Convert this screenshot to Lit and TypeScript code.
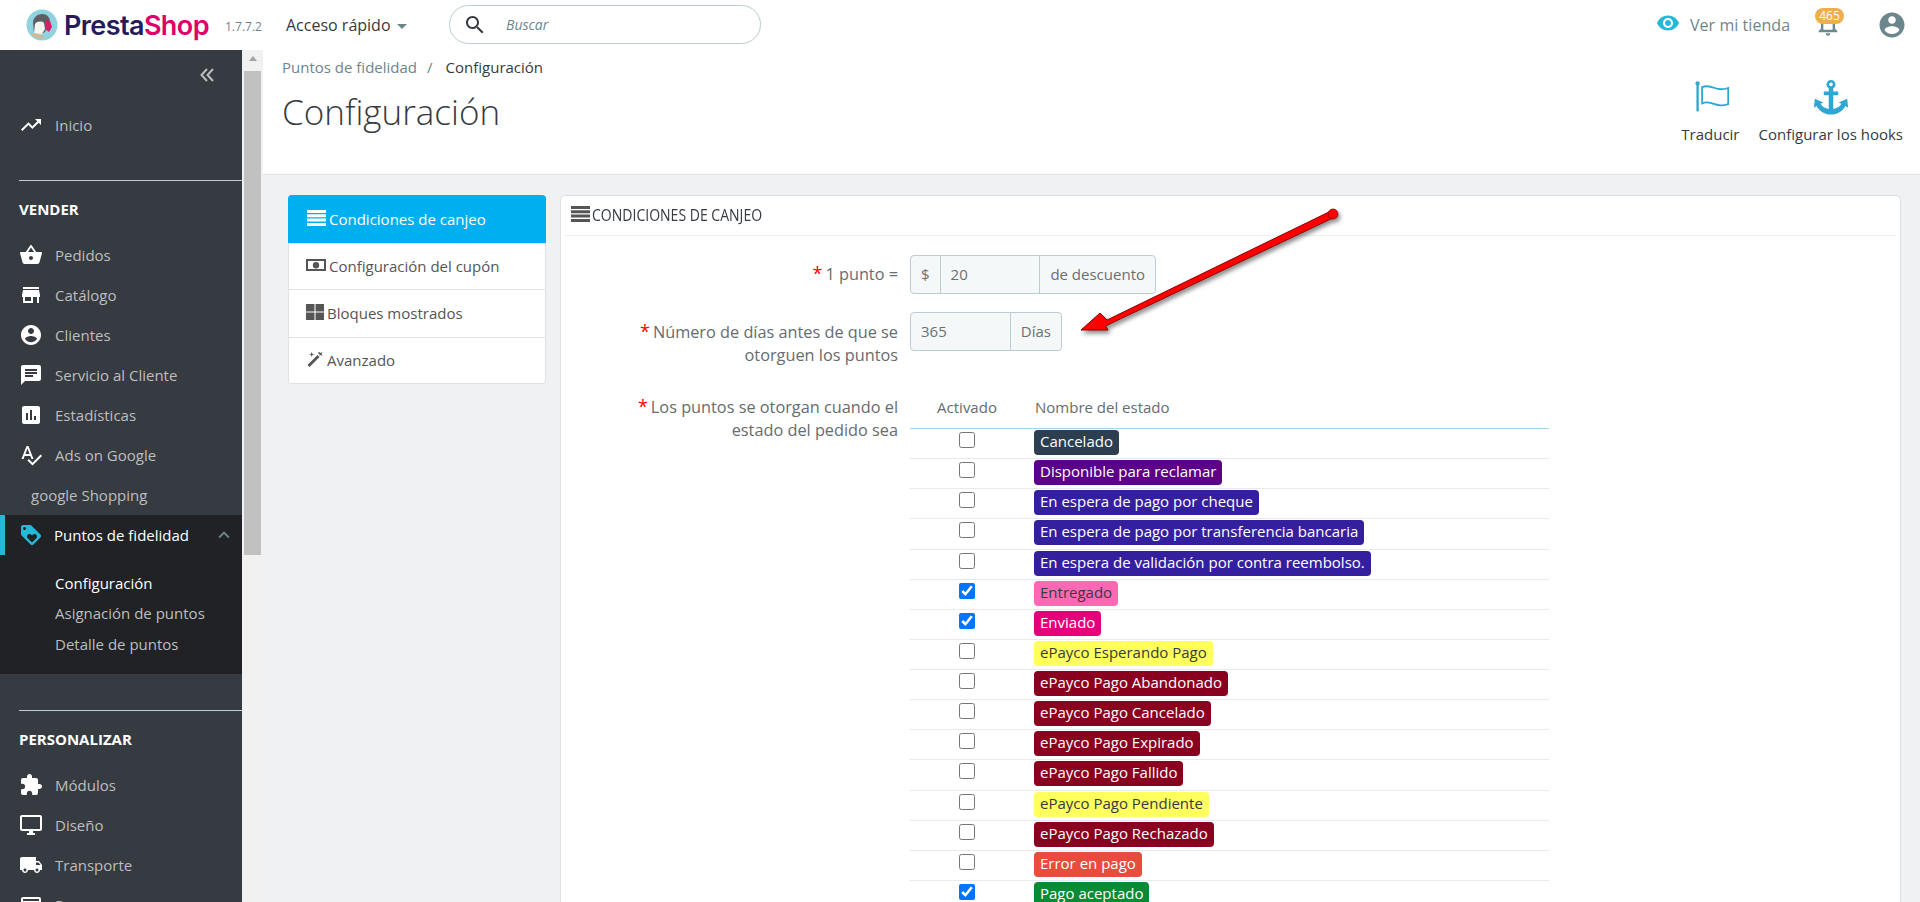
import { LitElement, html, css, svg } from "lit";
import { customElement } from "lit/decorators.js";

const P: Record<string, string> = {
  trend: "M16 6l2.29 2.29-4.88 4.88-4-4L2 16.59 3.41 18l6-6 4 4 6.3-6.29L22 12V6z",
  basket: "M17.21 9l-4.38-6.56c-.19-.28-.51-.42-.83-.42-.32 0-.64.14-.83.43L6.79 9H2c-.55 0-1 .45-1 1 0 .09.01.18.04.27l2.54 9.27c.23.84 1 1.46 1.92 1.46h13c.92 0 1.69-.62 1.93-1.46l2.54-9.27L23 10c0-.55-.45-1-1-1h-4.79zM9 9l3-4.4L15 9H9zm3 8c-1.1 0-2-.9-2-2s.9-2 2-2 2 .9 2 2-.9 2-2 2z",
  store: "M20 4H4v2h16V4zm1 10v-2l-1-5H4l-1 5v2h1v6h10v-6h4v6h2v-6h1zm-9 4H6v-4h6v4z",
  account: "M12 2C6.48 2 2 6.48 2 12s4.48 10 10 10 10-4.48 10-10S17.52 2 12 2zm0 3c1.66 0 3 1.34 3 3s-1.34 3-3 3-3-1.34-3-3 1.34-3 3-3zm0 14.2c-2.5 0-4.71-1.28-6-3.22.03-1.99 4-3.08 6-3.08 1.99 0 5.97 1.09 6 3.08-1.29 1.94-3.5 3.22-6 3.22z",
  chat: "M20 2H4c-1.1 0-1.99.9-1.99 2L2 22l4-4h14c1.1 0 2-.9 2-2V4c0-1.1-.9-2-2-2zM6 9h12v2H6V9zm8 5H6v-2h8v2zm4-6H6V6h12v2z",
  stats: "M19 3H5c-1.1 0-2 .9-2 2v14c0 1.1.9 2 2 2h14c1.1 0 2-.9 2-2V5c0-1.1-.9-2-2-2zM9 17H7v-7h2v7zm4 0h-2V7h2v10zm4 0h-2v-4h2v4z",
  spell: "M12.45 16h2.09L9.43 3H7.57L2.46 16h2.09l1.12-3h5.64l1.14 3zm-6.02-5L8.5 5.48 10.57 11H6.43zm15.16.59l-8.09 8.09L9.83 16l-1.41 1.41 5.09 5.09L23 13l-1.41-1.41z",
  loyalty: "M21.41 11.58l-9-9C12.05 2.22 11.55 2 11 2H4c-1.1 0-2 .9-2 2v7c0 .55.22 1.05.59 1.42l9 9c.36.36.86.58 1.41.58.55 0 1.05-.22 1.41-.59l7-7c.37-.36.59-.86.59-1.41 0-.55-.23-1.06-.59-1.42zM5.5 7C4.67 7 4 6.33 4 5.5S4.67 4 5.5 4 7 4.67 7 5.5 6.33 7 5.5 7zm11.77 8.27L13 19.54l-4.27-4.27C8.28 14.81 8 14.19 8 13.5c0-1.38 1.12-2.5 2.5-2.5.69 0 1.32.28 1.77.74l.73.72.73-.73c.45-.45 1.08-.73 1.77-.73 1.38 0 2.5 1.12 2.5 2.5 0 .69-.28 1.32-.73 1.77z",
  ext: "M20.5 11H19V7c0-1.1-.9-2-2-2h-4V3.5C13 2.12 11.88 1 10.5 1S8 2.12 8 3.5V5H4c-1.1 0-1.99.9-1.99 2v3.8H3.5c1.49 0 2.7 1.21 2.7 2.7s-1.21 2.7-2.7 2.7H2V20c0 1.1.9 2 2 2h3.8v-1.5c0-1.49 1.21-2.7 2.7-2.7 1.49 0 2.7 1.21 2.7 2.7V22H17c1.1 0 2-.9 2-2v-4h1.5c1.38 0 2.5-1.12 2.5-2.5S21.88 11 20.5 11z",
  desktop: "M21 2H3c-1.1 0-2 .9-2 2v12c0 1.1.9 2 2 2h7v2H8v2h8v-2h-2v-2h7c1.1 0 2-.9 2-2V4c0-1.1-.9-2-2-2zm0 14H3V4h18v12z",
  ship: "M20 8h-3V4H3c-1.1 0-2 .9-2 2v11h2c0 1.66 1.34 3 3 3s3-1.34 3-3h6c0 1.66 1.34 3 3 3s3-1.34 3-3h2v-5l-3-4zM6 18.5c-.83 0-1.5-.67-1.5-1.5s.67-1.5 1.5-1.5 1.5.67 1.5 1.5-.67 1.5-1.5 1.5zm13.5-9l1.96 2.5H17V9.5h2.5zm-1.5 9c-.83 0-1.5-.67-1.5-1.5s.67-1.5 1.5-1.5 1.5.67 1.5 1.5-.67 1.5-1.5 1.5z",
  pay: "M20 4H4c-1.11 0-1.99.89-1.99 2L2 18c0 1.11.89 2 2 2h16c1.11 0 2-.89 2-2V6c0-1.11-.89-2-2-2zm0 14H4v-6h16v6zm0-10H4V6h16v2z",
  eye: "M12 4.5C7 4.5 2.73 7.61 1 12c1.73 4.39 6 7.5 11 7.5s9.27-3.11 11-7.5c-1.73-4.39-6-7.5-11-7.5zM12 17c-2.76 0-5-2.24-5-5s2.24-5 5-5 5 2.24 5 5-2.24 5-5 5zm0-8c-1.66 0-3 1.34-3 3s1.34 3 3 3 3-1.34 3-3-1.34-3-3-3z",
  bell: "M12 22c1.1 0 2-.9 2-2h-4c0 1.1.9 2 2 2zm6-6v-5c0-3.07-1.63-5.64-4.5-6.32V4c0-.83-.67-1.5-1.5-1.5s-1.5.67-1.5 1.5v.68C7.64 5.36 6 7.92 6 11v5l-2 2v1h16v-1l-2-2zm-2 1H8v-6c0-2.48 1.51-4.5 4-4.5s4 2.02 4 4.5v6z",
  search: "M15.5 14h-.79l-.28-.27C15.41 12.59 16 11.11 16 9.5 16 5.91 13.09 3 9.5 3S3 5.91 3 9.5 5.91 16 9.5 16c1.61 0 3.09-.59 4.23-1.57l.27.28v.79l5 4.99L20.49 19l-4.99-5zm-6 0C7.01 14 5 11.99 5 9.5S7.01 5 9.5 5 14 7.01 14 9.5 11.99 14 9.5 14z",
  less: "M12 8l-6 6 1.41 1.41L12 10.83l4.59 4.58L18 14z",
};

const ic = (name: string, cls = "") =>
  html`<svg class="ic ${cls}" viewBox="0 0 24 24" fill="currentColor"><path d=${P[name]}></path></svg>`;

const STATES: [string, string, string, boolean][] = [
  ["Cancelado", "#2c3e50", "#fff", false],
  ["Disponible para reclamar", "#5c0089", "#fff", false],
  ["En espera de pago por cheque", "#34209e", "#fff", false],
  ["En espera de pago por transferencia bancaria", "#34209e", "#fff", false],
  ["En espera de validación por contra reembolso.", "#34209e", "#fff", false],
  ["Entregado", "#ff69b4", "#363a41", true],
  ["Enviado", "#e3007a", "#fff", true],
  ["ePayco Esperando Pago", "#ffff5e", "#363a41", false],
  ["ePayco Pago Abandonado", "#8a0120", "#fff", false],
  ["ePayco Pago Cancelado", "#8a0120", "#fff", false],
  ["ePayco Pago Expirado", "#8a0120", "#fff", false],
  ["ePayco Pago Fallido", "#8a0120", "#fff", false],
  ["ePayco Pago Pendiente", "#ffff5e", "#363a41", false],
  ["ePayco Pago Rechazado", "#8a0120", "#fff", false],
  ["Error en pago", "#e74c3c", "#fff", false],
  ["Pago aceptado", "#0a8a35", "#fff", true],
];

@customElement("app-root")
export class AppRoot extends LitElement {
  static styles = css`
    :host { display: block; height: 902px; overflow: hidden; position: relative; font-family: "Open Sans", sans-serif; font-size: 15px; color: #363a41; background: #fff; }
    * { box-sizing: border-box; }
    .ic { display: block; flex: none; }

    .top { height: 50px; display: flex; align-items: center; background: #fff; }
    .logo { display: flex; align-items: center; margin-left: 26px; width: 199px; gap: 6px; }
    .logo svg { width: 32px; height: 32px; flex: none; }
    .wordmark { font-family: "Inter", sans-serif; font-weight: 600; font-size: 27px; letter-spacing: -0.6px; color: #251b5b; line-height: 1; }
    .wordmark b { font-weight: 600; color: #df0067; }
    .ver { width: 61px; font-size: 12px; color: #6c868e; padding-top: 3px; }
    .quick { display: flex; align-items: center; gap: 6px; width: 163px; font-size: 16px; }
    .caret { width: 0; height: 0; border: 5px solid transparent; border-top-color: #6c868e; border-bottom: 0; margin-top: 2px; }
    .search { width: 312px; height: 39px; margin-top: -1px; border: 1px solid #bbcdd2; border-radius: 20px; display: flex; align-items: center; padding-left: 13px; gap: 20px; font-style: italic; font-size: 14px; color: #6c868e; }
    .search .ic { width: 24px; height: 24px; color: #363a41; margin-right: -1px; }
    .topright { margin-left: auto; display: flex; align-items: center; padding-right: 13px; }
    .eye { width: 24px; height: 24px; color: #25b9d7; margin: -4px 10px 0 0; }
    .shop { color: #6c868e; width: 124px; font-size: 16px; white-space: nowrap; letter-spacing: .05px; }
    .bellwrap { position: relative; width: 30px; height: 30px; margin-right: 33px; color: #6c868e; }
    .bellwrap .ic { width: 28px; height: 28px; }
    .count { position: absolute; left: 1px; top: -2px; height: 16px; width: 29px; border-radius: 8px; background: #f0ad4e; color: #fff; font-size: 12px; line-height: 16px; text-align: center; }
    .avatar { width: 30px; height: 30px; color: #6c868e; }

    .main { display: flex; height: 852px; }
    .side { width: 242px; flex: none; background: #363a41; color: #bebebe; overflow: hidden; }
    .collapse { height: 55px; display: flex; justify-content: flex-end; padding: 17px 27px 0 0; }
    .collapse svg { width: 16px; height: 16px; }
    .item { height: 40px; display: flex; align-items: center; padding-left: 19px; gap: 12px; }
    .item span { margin-top: -1px; }
    .item .ic { width: 24px; height: 24px; color: #fff; }
    .plain { padding-left: 31px; }
    .group { margin-top: 35px; margin-left: 19px; border-top: 1px solid #bbcdd2; padding: 17px 0 15px; font-weight: 700; color: #fff; line-height: 22px; }
    .group.second { margin-top: 36px; }
    .active { background: #202226; }
    .active .item { padding-left: 14px; border-left: 5px solid #25b9d7; color: #fff; padding-right: 7px; gap: 11px; }
    .active .item .ic:first-child { color: #25b9d7; }
    .active .item .chev { margin-left: auto; color: #6c868e; width: 22px; height: 22px; }
    .subs { padding: 13px 0 15px; }
    .sub { height: 30.4px; line-height: 30.4px; padding-left: 55px; }
    .sub.on { color: #fff; }

    .scroll { width: 21px; flex: none; background: #f1f1f1; padding: 0 2px; }
    .arrow { height: 17px; display: flex; justify-content: center; align-items: center; }
    .arrow i { width: 0; height: 0; border: 4px solid transparent; border-bottom: 5px solid #a3a3a3; border-top: 0; }
    .thumb { margin-top: 4px; height: 484px; background: #c1c1c1; }

    .content { flex: 1; min-width: 0; background: #eff1f2; overflow: hidden; }
    .head { height: 125px; background: #fff; border-bottom: 1px solid #dfe3e5; display: flex; justify-content: space-between; padding-left: 19px; }
    .crumb { margin-top: 7px; line-height: 20px; color: #6c868e; display: flex; gap: 10px; }
    .crumb b { font-weight: 400; color: #363a41; margin-left: 3px; }
    h1 { margin: 13px 0 0; font-size: 35px; font-weight: 300; line-height: 44px; color: #363a41; }
    .tools { display: flex; padding: 28px 17px 0 0; gap: 19px; }
    .tool { display: flex; flex-direction: column; align-items: center; color: #363a41; line-height: 20px; }
    .tool svg { width: 36px; height: 36px; color: #2ea8d2; margin: 1px 0 9px; }
    .tool svg.flag { margin-left: 3px; }

    .body { display: flex; align-items: flex-start; padding: 20px 19px 0 25px; gap: 14px; }
    .tabs { width: 258px; flex: none; background: #fff; border: 1px solid #dfe3e5; border-top: 0; border-radius: 4px; color: #555; }
    .tab { height: 46px; border-top: 1px solid #dfe3e5; display: flex; align-items: center; padding: 0 0 0 18px; gap: 3px; margin: 0 -1px; }
    .tab span { margin-top: -2px; }
    .tab.h48 { height: 48px; }
    .tab:first-child { height: 48px; background: #00aff0; color: #fff; border: 0; border-radius: 4px 4px 0 0; padding-left: 19px; }
    .tab:first-child span { margin-top: 0; }
    .tab svg { width: 19px; height: 16px; flex: none; margin-top: -3px; }
    .panel { flex: 1; background: #fff; border: 1px solid #dbe1e3; border-radius: 5px; height: 760px; padding: 0 4px; }
    .phead { height: 40px; border-bottom: 1px solid #eef0f1; display: flex; align-items: center; padding-left: 6px; gap: 2px; color: #363a41; }
    .phead svg { width: 19px; height: 16px; color: #555; margin-top: -3px; flex: none; }
    .phead span { font-size: 17px; transform: scaleX(0.825); transform-origin: left center; white-space: nowrap; margin-top: -2px; }

    .form { padding-top: 19px; display: flex; flex-direction: column; }
    .row { display: flex; gap: 12px; }
    .row1 { margin-bottom: 18px; }
    .row2 { height: 83px; }
    .lab { width: 285px; margin-left: 48px; flex: none; text-align: right; line-height: 23px; color: #666c70; font-size: 16.3px; }
    .lab.mid { align-self: center; }
    .lab i { font-style: normal; color: #f00; font-size: 18px; line-height: 1; margin-right: 3px; }
    .lab.two { margin-top: 9px; }
    .lab.three { margin-top: 1px; }
    .ig { display: flex; height: 39px; border: 1px solid #bbcdd2; border-radius: 4px; background: #f5f8f9; color: #6c6f72; line-height: 37px; white-space: nowrap; }
    .ig span { padding: 0 10px; }
    .ig span + span { border-left: 1px solid #bbcdd2; }
    .w1 { width: 246px; }
    .w2 { width: 152px; }
    .fill1 { width: 100px; }
    .fill2 { width: 99px; }

    .tbl { width: 639px; }
    .thr { height: 34px; padding-top: 1px; border-bottom: 1px solid #a4d3ee; display: grid; grid-template-columns: 124px 1fr; line-height: 23px; color: #666c70; }
    .thr span:first-child { text-align: center; padding-right: 10px; }
    .thr span:last-child { padding-left: 1px; }
    .tr { height: 30.13px; border-bottom: 1px solid #e7ebed; display: grid; grid-template-columns: 124px 1fr; align-items: start; padding-top: 1px; }
    .tr .cb { display: flex; justify-content: center; padding: 2px 10px 0 0; }
    .tr input { width: 16px; height: 16px; margin: 0; }
    .badge { display: inline-block; height: 25px; line-height: 23px; padding: 0 6px; border-radius: 4px; }

    .annot { position: absolute; left: 1070px; top: 200px; pointer-events: none; filter: drop-shadow(2px 3px 2px rgba(0,0,0,.45)); }
  `;

  private side(icon: string, label: string) {
    return html`<div class="item">${ic(icon)}<span>${label}</span></div>`;
  }

  render() {
    return html`
      <div class="top">
        <div class="logo">
          <svg viewBox="0 0 32 32">
            <circle cx="16" cy="16" r="15.5" fill="#8fd3df"></circle>
            <path d="M7 14c0-5 4-9 9-9s7 3 8 6l-2 4-3 8-6 3-5-2z" fill="#5d5f63"></path>
            <path d="M9 15c2-3 7-3 9-1l1 6-3 5-5 2-3-3z" fill="#f4f4f1"></path>
            <path d="M19 11l5 1 2 6-3 5-4-3z" fill="#d81d6b"></path>
            <path d="M5 26c4 3 9 5 14 3l-5-4-6-1z" fill="#cdbb98"></path>
          </svg>
          <span class="wordmark">Presta<b>Shop</b></span>
        </div>
        <div class="ver">1.7.7.2</div>
        <div class="quick"><span>Acceso rápido</span><i class="caret"></i></div>
        <div class="search">${ic("search")}<span>Buscar</span></div>
        <div class="topright">
          ${ic("eye", "eye")}<span class="shop">Ver mi tienda</span>
          <div class="bellwrap">${ic("bell")}<span class="count">465</span></div>
          ${ic("account", "avatar")}
        </div>
      </div>
      <div class="main">
        <nav class="side">
          <div class="collapse">
            <svg viewBox="0 0 16 16" fill="none" stroke="#bebebe" stroke-width="2"><path d="M8 2L2.500 8 8 14M14 2L8.500 8 14 14"></path></svg>
          </div>
          ${this.side("trend", "Inicio")}
          <div class="group">VENDER</div>
          ${this.side("basket", "Pedidos")}
          ${this.side("store", "Catálogo")}
          ${this.side("account", "Clientes")}
          ${this.side("chat", "Servicio al Cliente")}
          ${this.side("stats", "Estadísticas")}
          ${this.side("spell", "Ads on Google")}
          <div class="item plain"><span>google Shopping</span></div>
          <div class="active">
            <div class="item">${ic("loyalty")}<span>Puntos de fidelidad</span>${ic("less", "chev")}</div>
            <div class="subs">
              <div class="sub on">Configuración</div>
              <div class="sub">Asignación de puntos</div>
              <div class="sub">Detalle de puntos</div>
            </div>
          </div>
          <div class="group second">PERSONALIZAR</div>
          ${this.side("ext", "Módulos")}
          ${this.side("desktop", "Diseño")}
          ${this.side("ship", "Transporte")}
          ${this.side("pay", "Pago")}
        </nav>
        <div class="scroll"><div class="arrow"><i></i></div><div class="thumb"></div></div>
        <div class="content">
          <div class="head">
            <div>
              <div class="crumb"><span>Puntos de fidelidad</span><span>/</span><b>Configuración</b></div>
              <h1>Configuración</h1>
            </div>
            <div class="tools">
              <div class="tool">
                <svg class="flag" viewBox="0 0 40 40" fill="none" stroke="currentColor" stroke-width="2"><path d="M4 6v30" stroke-width="2.600"></path><circle cx="4" cy="5" r="2.400" fill="currentColor" stroke="none"></circle><path d="M9 9c5-2 9-1 14 1s9 2 15 0v18c-6 2-10 2-15 0s-9-3-14-1z"></path></svg>
                <span>Traducir</span>
              </div>
              <div class="tool">
                <svg viewBox="0 0 40 40" fill="currentColor"><path fill-rule="evenodd" d="M20 1a5 5 0 0 1 2.500 9.300V14H28v4h-5.500v15.200c4-.5 7.500-2.600 9-5.700L28.500 26 38 22l1 10-3-2c-3 6-9 9.500-16 9.500S7 36 4 30l-3 2 1-10 9.500 4-3 1.500c1.500 3.100 5 5.200 9 5.700V18H12v-4h5.500v-3.700A5 5 0 0 1 20 1zm0 3a2 2 0 1 0 0 4 2 2 0 0 0 0-4z"></path></svg>
                <span>Configurar los hooks</span>
              </div>
            </div>
          </div>
          <div class="body">
            <div class="tabs">
              <div class="tab">
                <svg viewBox="0 0 19 16" fill="currentColor"><path d="M0 0h19v3H0zM0 4.300h19v3H0zM0 8.600h19v3H0zM0 12.900h19v3H0z"></path></svg>
                <span>Condiciones de canjeo</span>
              </div>
              <div class="tab">
                <svg viewBox="0 0 20 16" fill="#555" style="width:20px"><path fill-rule="evenodd" d="M0 2h20v12H0zM2 4v8h16V4zM10 5a3.200 3.200 0 1 1 0 6.400A3.200 3.200 0 0 1 10 5z"></path></svg>
                <span>Configuración del cupón</span>
              </div>
              <div class="tab h48">
                <svg style="width:18px" viewBox="0 0 17 15" fill="#555"><path d="M0 0h8v7H0zM9 0h8v7H9zM0 8h8v7H0zM9 8h8v7H9z"></path></svg>
                <span>Bloques mostrados</span>
              </div>
              <div class="tab">
                <svg style="width:18px" viewBox="0 0 17 16" fill="#555"><path d="M1 14L11 4l2 2L3 16zM13 1l1 1 2-1-1 2 1 2-2-1-1 1v-2l-2-1zM5 1l1 2 2 .5-2 .5-1 2-.5-2-2-.5 2-.5z"></path></svg>
                <span>Avanzado</span>
              </div>
            </div>
            <div class="panel">
              <div class="phead">
                <svg viewBox="0 0 19 16" fill="currentColor"><path d="M0 0h19v3H0zM0 4.300h19v3H0zM0 8.600h19v3H0zM0 12.900h19v3H0z"></path></svg>
                <span>CONDICIONES DE CANJEO</span>
              </div>
              <div class="form">
                <div class="row row1">
                  <div class="lab mid"><i>*</i>1 punto =</div>
                  <div class="ig w1"><span>$</span><span class="fill1">20</span><span>de descuento</span></div>
                </div>
                <div class="row row2">
                  <div class="lab two"><i>*</i>Número de días antes de que se otorguen los puntos</div>
                  <div class="ig w2"><span class="fill2">365</span><span>Días</span></div>
                </div>
                <div class="row">
                  <div class="lab three"><i>*</i>Los puntos se otorgan cuando el estado del pedido sea</div>
                  <div class="tbl">
                    <div class="thr"><span>Activado</span><span>Nombre del estado</span></div>
                    ${STATES.map(
                      ([name, bg, fg, on]) => html`<div class="tr">
                        <div class="cb"><input type="checkbox" .checked=${on} /></div>
                        <div><span class="badge" style="background:${bg};color:${fg}">${name}</span></div>
                      </div>`
                    )}
                  </div>
                </div>
              </div>
            </div>
          </div>
        </div>
      </div>
      <svg class="annot" width="275" height="140" viewBox="1070 200 275 140">
        ${svg`<path d="M1331 211 L1107 320 L1100 313 L1081 330 L1108 330 L1105.500 326 L1335 217 Z" fill="#f00" stroke="#8a0000" stroke-width="1"></path>
        <circle cx="1333" cy="214" r="5" fill="#f00" stroke="#8a0000" stroke-width=".7"></circle>`}
      </svg>
    `;
  }
}
